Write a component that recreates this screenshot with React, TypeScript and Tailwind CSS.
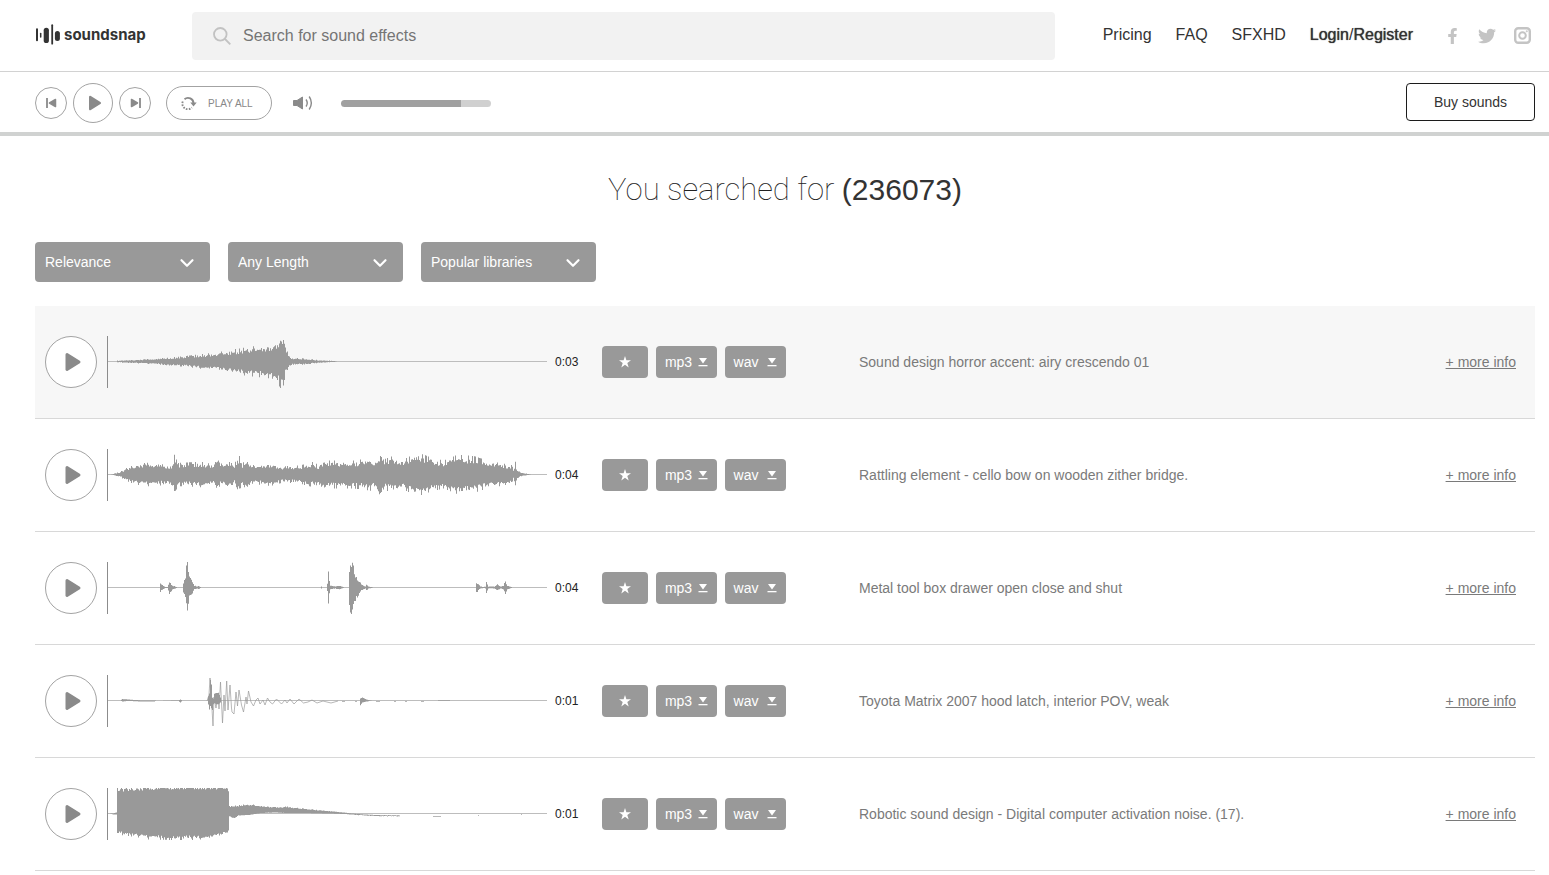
import clsx from 'clsx';
import { ReactNode } from 'react';
import { ChevronDown } from 'lucide-react';
import { FaFacebookF, FaTwitter } from 'react-icons/fa';

// [x, height above the axis, height below the axis]
type EnvelopePoint = [number, number, number];

interface Sound {
  title: string;
  duration: string;
  envelope: EnvelopePoint[];
  trace?: string;
  roughness?: number;
}

const symmetric = (points: [number, number][]): EnvelopePoint[] => points.map(([x, amp]) => [x, amp, amp]);

const sounds: Sound[] = [
  {
    title: 'Sound design horror accent: airy crescendo 01',
    duration: '0:03',
    roughness: 0.4,
    envelope: symmetric([
      [8, 0], [9, 0.8], [29, 1.6], [55, 3], [72, 4.2], [89, 6], [105, 7.5], [122, 10], [139, 12.5], [155, 14],
      [165, 15], [170, 20], [173, 25], [175, 25], [177, 12], [182, 3.5], [202, 2.2], [210, 1.2], [225, 0.6], [229, 0],
    ]),
  },
  {
    title: 'Rattling element - cello bow on wooden zither bridge.',
    duration: '0:04',
    roughness: 0.4,
    envelope: symmetric([
      [2, 0], [5, 0.6], [12, 2.5], [19, 6], [25, 8], [35, 10], [49, 10.5], [59, 7], [63, 9], [66, 17], [68, 16],
      [70, 10], [92, 11], [105, 9], [108, 17], [110, 16], [112, 9], [122, 13], [126, 8], [129, 17], [131, 16],
      [134, 10], [140, 13], [144, 8], [162, 10], [174, 7], [192, 8], [205, 11], [210, 8], [216, 13], [222, 12],
      [232, 12], [245, 12], [262, 14], [267, 12], [270, 18], [275, 13], [285, 16], [295, 13], [309, 19], [322, 15],
      [335, 12], [349, 17], [365, 16], [379, 12], [392, 10], [404, 8], [405, 4], [407, 11], [409, 4], [412, 2],
      [420, 0.5], [423, 0],
    ]),
  },
  {
    title: 'Metal tool box drawer open close and shut',
    duration: '0:04',
    roughness: 0.25,
    envelope: symmetric([
      [51, 0], [52, 4], [55, 1.5], [57, 0.5], [59, 0.5], [61, 6], [64, 2], [68, 0.5], [69, 0], [74, 0], [75, 5],
      [77, 11], [78, 20], [79, 25], [80, 17], [81, 10], [83, 7], [86, 2], [89, 1], [90, 2], [92, 0.5], [93, 0],
      [212, 0], [213, 1], [214, 0], [218, 0], [219, 4], [220, 20], [221, 6], [222, 2], [227, 1], [231, 2], [236, 0],
      [240, 0], [241, 18], [242, 26], [243, 24], [244, 26], [246, 14], [249, 9], [253, 3], [257, 1], [258, 3],
      [260, 1], [266, 0], [367, 0], [368, 5], [372, 1], [375, 0.5], [377, 1], [378, 6], [380, 1], [386, 1],
      [389, 3], [392, 1], [395, 2], [397, 6], [399, 2], [404, 0],
    ]),
  },
  {
    title: 'Toyota Matrix 2007 hood latch, interior POV, weak',
    duration: '0:01',
    envelope: [
      [12, 0, 0], [14, 1.5, 1], [20, 1, 0.5], [34, 0, 1], [46, 0, 1], [48, 0, 0], [70, 0, 0.5], [72, 1, 2],
      [74, 0, 0], [99, 0, 0], [100, 4, 4], [101, 7, 9], [102, 22, 6], [103, 16, 8], [104, 3, 10], [105, 2, 4],
      [106, 7, 3], [108, 8, 4], [110, 8, 4], [112, 3, 2], [113, 0, 0], [251, 0, 0], [252, 2, 5], [254, 3, 2],
      [258, 1, 1], [262, 0, 0.5], [264, 0, 0],
    ],
    trace:
      'M99 26 L101 20 L102 3 L103 16 L104 34 L105 51 L106 22 L108 33 L110 18 L111 34 L112.500 7 L114.500 48 L116 20 L117 36 L118.700 6 L120 35 L122 10 L123.500 33 L124 37 L126 39 L128 17 L129.500 31 L131 15 L133.500 30 L135.500 37 L138 22 L139 29 L140.500 16 L143 27 L145.500 31 L148 25 L150 23 L152 29 L155 25 L157 30 L159.500 23 L162 27 L164.500 29 L168.500 24 L173.500 29 L177 25 L179 28 L182 24 L186 29 L191 24 L195.500 28 L200 27 L204 25 L209 28 L215 26 L223 28 L230 26 M234 26.500 H237 M247 26.500 H249 M268 26.500 H272 M286 26.500 H288 M297 26.500 H299 M313 26.500 H316 M330 25.500 H342',
  },
  {
    title: 'Robotic sound design - Digital computer activation noise. (17).',
    duration: '0:01',
    roughness: 0.14,
    envelope: [
      [1, 0, 0], [5, 0, 1.2], [8, 1, 1], [9, 25, 20], [25, 25, 22], [40, 26, 24.5], [60, 27, 25], [85, 27, 25],
      [105, 27, 24], [112, 27, 22], [119, 26.5, 19], [120, 25, 18], [121, 7.5, 3], [126, 7.5, 5], [130, 8, 2],
      [141, 9, 1.5], [152, 7.5, -0.5], [165, 6.5, -1], [180, 6.5, -0.5], [198, 4.5, -0.5], [220, 2.5, 0],
      [236, 1, 0.5], [248, -0.5, 1.5], [265, -1.5, 2.5], [291, -2, 3], [292, 0, 0], [324, 0, 0],
    ],
    trace: 'M325 28.500 H333 M370 27.500 H371 M413 26.500 H414',
  },
];

const filters = [
  { label: 'Sort by', options: ['Relevance', 'Newest', 'Popularity'] },
  { label: 'Length', options: ['Any Length', 'Short', 'Long'] },
  { label: 'Library', options: ['Popular libraries', 'All libraries'] },
];

// Repeatable noise so that a sound always gets the same outline
const noise = (n: number) => {
  const v = Math.sin(n * 127.1 + 311.7) * 43758.5453;
  return v - Math.floor(v);
};

function outline(points: EnvelopePoint[], roughness: number) {
  const mid = 25.5;
  const upper: string[] = [];
  const lower: string[] = [];
  // mostly small dips, with a sharp peak now and then
  const jitter = (seed: number) => {
    const n = noise(seed);
    return n > 0.85 ? 1 + roughness * 0.4 : 1 - roughness * n;
  };
  for (let i = 0; i < points.length - 1; i++) {
    const [x0, up0, down0] = points[i];
    const [x1, up1, down1] = points[i + 1];
    for (let x = x0; x < x1; x++) {
      const t = (x - x0) / (x1 - x0);
      const up = (up0 + (up1 - up0) * t) * jitter(x);
      const down = (down0 + (down1 - down0) * t) * jitter(x + 500);
      upper.push(`${x} ${(mid - up).toFixed(1)}`, `${x + 1} ${(mid - up).toFixed(1)}`);
      lower.unshift(`${x + 1} ${(mid + down).toFixed(1)}`, `${x} ${(mid + down).toFixed(1)}`);
    }
  }
  return `M${upper.join('L')}L${lower.join('L')}Z`;
}

function Waveform({ sound }: { sound: Sound }) {
  return (
    <svg viewBox="0 0 439 52" className="h-[52px] w-[440px] shrink-0 border-l border-[#8c8c8c]" aria-hidden="true">
      <path d="M0 25.500H439" stroke="#bdbdbd" />
      <path d={outline(sound.envelope, sound.roughness ?? 0.1)} fill="#999" />
      {sound.trace && <path d={sound.trace} fill="none" stroke="#999" strokeWidth="0.7" />}
    </svg>
  );
}

function PlayIcon({ className }: { className?: string }) {
  return (
    <svg viewBox="0 0 16 20" className={className} aria-hidden="true">
      <path d="M2 2.500 14 10 2 17.500Z" fill="#8a8a8a" stroke="#8a8a8a" strokeWidth="3" strokeLinejoin="round" />
    </svg>
  );
}

function SkipIcon({ className }: { className?: string }) {
  return (
    <svg viewBox="0 0 11 10" className={className} aria-hidden="true">
      <path d="M1 0V10" stroke="#8a8a8a" strokeWidth="1.800" />
      <path d="M9.500 1.500 3.500 5 9.500 8.500Z" fill="#8a8a8a" stroke="#8a8a8a" strokeWidth="1.500" strokeLinejoin="round" />
    </svg>
  );
}

function DownloadIcon() {
  return (
    <svg viewBox="0 0 10 9" className="h-[9px] w-[10px]" fill="white" aria-hidden="true">
      <path d="M1 0H9L5 5.500Z" />
      <path d="M0.500 7H9.500V8.300H0.500Z" />
    </svg>
  );
}

function RoundButton({ label, className, children }: { label: string; className: string; children: ReactNode }) {
  return (
    <button
      type="button"
      aria-label={label}
      className={clsx('flex shrink-0 items-center justify-center rounded-full border border-[#a3a3a3] bg-white', className)}
    >
      {children}
    </button>
  );
}

function Logo() {
  return (
    <a href="#" className="flex w-[111px] shrink-0 items-center gap-1 pb-0.5 text-[#333]">
      <svg viewBox="0 0 25 22" className="h-[22px] w-[25px] shrink-0" stroke="currentColor" strokeLinecap="round" aria-hidden="true">
        <path d="M2 5.300V16.300" strokeWidth="2" />
        <path d="M5.700 9.500V13" strokeWidth="1.500" />
        <path d="M11.300 6.300V16.400" strokeWidth="5.200" />
        <path d="M17.200 1.200V19.700" strokeWidth="1.800" />
        <path d="M22.400 9.500V14.500" strokeWidth="5" />
      </svg>
      <span className="font-['Inter',sans-serif] text-[15px] leading-5 font-bold">soundsnap</span>
    </a>
  );
}

function Header() {
  return (
    <header className="flex h-[72px] items-center border-b border-[#d2d2d2] pr-[18px] pl-[35px]">
      <Logo />
      <label className="ml-[46px] flex h-12 flex-1 items-center rounded bg-[#f2f2f2] pl-[21px]">
        <svg viewBox="0 0 18 18" className="h-[18px] w-[18px]" fill="none" stroke="#c2c2c2" strokeWidth="1.800" aria-hidden="true">
          <circle cx="7.300" cy="7.300" r="6.300" />
          <path d="M12 12 17.300 17.300" />
        </svg>
        <input
          type="search"
          aria-label="Search for sound effects"
          placeholder="Search for sound effects"
          className="ml-3 flex-1 bg-transparent text-base outline-none placeholder:text-[#757575]"
        />
      </label>
      <nav className="ml-12 flex gap-6 pb-0.5 text-base text-[#333]">
        <a href="#">Pricing</a>
        <a href="#">FAQ</a>
        <a href="#">SFXHD</a>
        <span>
          <a href="#" className="[text-shadow:0_0_1px_#333]">Login</a>/
          <a href="#" className="[text-shadow:0_0_1px_#333]">Register</a>
        </span>
      </nav>
      <div className="ml-8 flex items-center gap-[18px] text-[#c4c4c4]">
        <a href="#" aria-label="Facebook"><FaFacebookF className="h-4 w-[15px]" /></a>
        <a href="#" aria-label="Twitter"><FaTwitter className="h-[18px] w-[18px]" /></a>
        <a href="#" aria-label="Instagram">
          <svg viewBox="0 0 17 17" className="h-[17px] w-[17px]" fill="none" stroke="currentColor" aria-hidden="true">
            <rect x="1.200" y="1.200" width="14.600" height="14.600" rx="3" strokeWidth="2.400" />
            <circle cx="8.500" cy="8.500" r="3.300" strokeWidth="2" />
            <circle cx="12.800" cy="4.300" r="0.800" fill="currentColor" strokeWidth="0.500" />
          </svg>
        </a>
      </div>
    </header>
  );
}

function PlayerBar() {
  return (
    <div className="flex h-16 items-center justify-between border-b-4 border-[#d0d2d1] pr-[14px] pl-[35px]">
      <div className="flex items-center pt-0.5">
        <div className="flex items-center gap-[6px]">
          <RoundButton label="Previous" className="h-8 w-8">
            <SkipIcon className="h-[10px] w-[11px]" />
          </RoundButton>
          <RoundButton label="Play" className="h-10 w-10">
            <PlayIcon className="ml-[3px] h-4 w-[14px]" />
          </RoundButton>
          <RoundButton label="Next" className="h-8 w-8">
            <SkipIcon className="h-[10px] w-[11px] rotate-180" />
          </RoundButton>
        </div>
        <button
          type="button"
          className="ml-[15px] flex h-[34px] w-[106px] items-center rounded-full border border-[#a3a3a3] pl-[14px] text-[10px] text-[#888]"
        >
          <svg viewBox="0 0 16 14" className="mr-[11px] h-[14px] w-4" fill="none" stroke="#8a8a8a" aria-hidden="true">
            <path d="M3.500 3.200A5.500 5.500 0 0 1 12.500 7.500" strokeWidth="1.900" />
            <path d="M1.800 5.500A5.500 5.500 0 0 0 10.800 11.500" strokeWidth="1.900" strokeDasharray="1.600 1.300" />
            <path d="M9.300 6.500H15.700L12.500 10.500Z" fill="#8a8a8a" stroke="none" />
          </svg>
          PLAY ALL
        </button>
        <button type="button" aria-label="Mute" className="ml-[21px]">
          <svg viewBox="0 0 20 16" className="h-4 w-5" fill="none" stroke="#8a8a8a" aria-hidden="true">
            <path d="M0.500 5.500H4L9.500 2V14L4 10.500H0.500Z" fill="#8a8a8a" strokeLinejoin="round" />
            <path d="M13 4.500Q15.500 8 13 11.500" strokeWidth="1.400" />
            <path d="M16.200 1.500Q20.500 8 16.200 14.500" strokeWidth="1.400" />
          </svg>
        </button>
        <input
          type="range"
          aria-label="Volume"
          min={0}
          max={100}
          defaultValue={80}
          className="ml-7 h-[7px] w-[150px] appearance-none rounded-full bg-[linear-gradient(to_right,#a0a0a0_80%,#d0d0d0_80%)] [&::-webkit-slider-thumb]:w-0 [&::-webkit-slider-thumb]:appearance-none"
        />
      </div>
      <a
        href="#"
        className="flex h-[38px] w-[129px] items-center justify-center rounded border border-[#1c1c1c] text-sm text-[#333]"
      >
        Buy sounds
      </a>
    </div>
  );
}

function FilterSelect({ label, options }: { label: string; options: string[] }) {
  return (
    <div className="relative w-[175px]">
      <select aria-label={label} className="h-10 w-full appearance-none rounded bg-[#999] px-[10px] text-sm text-white">
        {options.map((option) => (
          <option key={option}>{option}</option>
        ))}
      </select>
      <ChevronDown
        className="pointer-events-none absolute top-[10px] right-3 h-[22px] w-[22px] text-white"
        strokeWidth={2.4}
      />
    </div>
  );
}

function SoundRow({ sound, active }: { sound: Sound; active: boolean }) {
  const button = 'flex h-8 items-center justify-center rounded bg-[#999] text-sm text-white';

  return (
    <li className={clsx('flex h-[113px] items-center border-b border-[#d8d8d8] pr-[19px] pl-[10px]', active && 'bg-[#f7f7f7]')}>
      <RoundButton label={`Play ${sound.title}`} className="mr-[10px] h-[52px] w-[52px]">
        <PlayIcon className="ml-[3px] h-5 w-[18px]" />
      </RoundButton>
      <Waveform sound={sound} />
      <span className="ml-2 w-[47px] text-xs text-[#222]">{sound.duration}</span>
      <div className="flex shrink-0 gap-2">
        <button type="button" aria-label="Add to favourites" className={clsx(button, 'w-[46px]')}>
          <svg viewBox="0 0 12 12" className="h-3 w-3" fill="white" aria-hidden="true">
            <path d="M6 0 7.400 4.300H12L8.300 7 9.700 11.500 6 8.700 2.300 11.500 3.700 7 0 4.300H4.600Z" />
          </svg>
        </button>
        <button type="button" className={clsx(button, 'w-[61px] gap-[6px]')}>
          mp3 <DownloadIcon />
        </button>
        <button type="button" className={clsx(button, 'w-[61px] gap-[9px]')}>
          wav <DownloadIcon />
        </button>
      </div>
      <p className="ml-[73px] flex-1 text-sm text-[#7a7a7a]">{sound.title}</p>
      <a href="#" className="text-sm text-[#7a7a7a] underline">+ more info</a>
    </li>
  );
}

export default function App() {
  return (
    <div className="bg-white font-['Liberation_Sans',Arial,sans-serif]">
      <Header />
      <PlayerBar />
      <main className="pr-[14px] pl-[35px]">
        <h1 className="pt-8 text-center font-['Roboto',sans-serif] text-[31px] leading-[44px] font-thin text-[#222]">
          You searched for{' '}
          <span className="font-['Liberation_Sans',Arial,sans-serif] text-[30px] font-normal text-[#333]">(236073)</span>
        </h1>
        <div className="mt-[30px] flex gap-[18px]">
          {filters.map((filter) => (
            <FilterSelect key={filter.label} label={filter.label} options={filter.options} />
          ))}
        </div>
        <ul className="mt-6">
          {sounds.map((sound, index) => (
            <SoundRow key={sound.title} sound={sound} active={index === 0} />
          ))}
        </ul>
      </main>
    </div>
  );
}
